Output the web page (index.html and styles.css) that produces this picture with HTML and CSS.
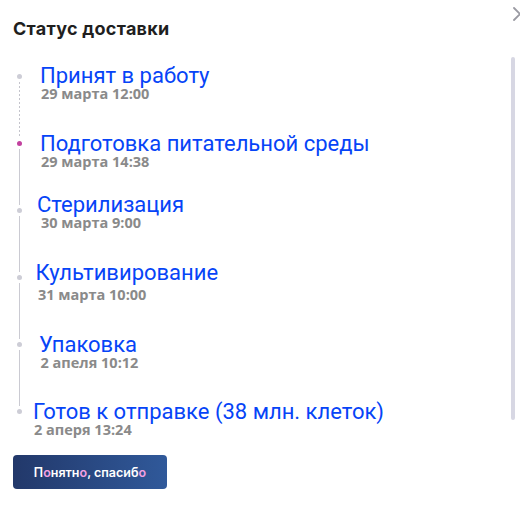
FILE: index.html
```html
<!DOCTYPE html>
<html lang="ru">
<head>
<meta charset="utf-8">
<title>Статус доставки</title>
<link rel="stylesheet" href="styles.css">
</head>
<body>
<div class="sheet">
  <header class="sheet-head">
    <h2 class="sheet-title">Статус доставки</h2>
    <button class="close" aria-label="Закрыть">
      <svg viewBox="0 0 14 14" width="14" height="14"><path d="M1 1L13 13M1 13L13 1" stroke="#9a9aa2" stroke-width="1.8" stroke-linecap="round" fill="none"/></svg>
    </button>
  </header>
  <div class="sheet-body">
    <ol class="timeline">
      <li class="step">
        <div class="step-marker"><span class="step-dot"></span><span class="step-line step-line--dashed"></span></div>
        <div class="step-info"><div class="step-name">Принят в работу</div><div class="step-date">29 марта 12:00</div></div>
      </li>
      <li class="step step--current">
        <div class="step-marker"><span class="step-dot"></span><span class="step-line"></span></div>
        <div class="step-info"><div class="step-name">Подготовка питательной среды</div><div class="step-date">29 марта 14:38</div></div>
      </li>
      <li class="step">
        <div class="step-marker"><span class="step-dot"></span><span class="step-line"></span></div>
        <div class="step-info"><div class="step-name">Стерилизация</div><div class="step-date">30 марта 9:00</div></div>
      </li>
      <li class="step">
        <div class="step-marker"><span class="step-dot"></span><span class="step-line"></span></div>
        <div class="step-info"><div class="step-name">Культивирование</div><div class="step-date">31 марта 10:00</div></div>
      </li>
      <li class="step">
        <div class="step-marker"><span class="step-dot"></span><span class="step-line"></span></div>
        <div class="step-info"><div class="step-name">Упаковка</div><div class="step-date">2 апеля 10:12</div></div>
      </li>
      <li class="step">
        <div class="step-marker"><span class="step-dot"></span></div>
        <div class="step-info"><div class="step-name">Готов к отправке (38 млн. клеток)</div><div class="step-date">2 аперя 13:24</div></div>
      </li>
    </ol>
    <div class="scrollbar"></div>
  </div>
  <button class="btn">П<span class="btn-o">о</span>нятн<span class="btn-o">о</span>, спасиб<span class="btn-o">о</span></button>
</div>
</body>
</html>
```
FILE: styles.css
```css
html, body {
  margin: 0;
  padding: 0;
  background: #fff;
  overflow: hidden;
}

.sheet {
  position: relative;
  width: 520px;
  height: 521px;
  box-sizing: border-box;
  padding: 19px 0 0 13px;
}

.sheet-title {
  margin: 0;
  font: 700 18px/20px Inter, "Liberation Sans", sans-serif;
  letter-spacing: 0.25px;
  color: #1f1f1f;
}

.close {
  position: absolute;
  left: 513px;
  top: 7px;
  width: 14px;
  height: 14px;
  padding: 0;
  border: 0;
  background: none;
}

.close svg {
  display: block;
}

.sheet-body {
  display: flex;
  margin-top: 18px;
}

.timeline {
  flex: 1;
  list-style: none;
  margin: 0;
  padding: 17px 0 0 4px;
}

.step {
  display: flex;
  height: 67px;
}

.step:last-child {
  height: auto;
}

.step-marker {
  flex: none;
  width: 5px;
  display: flex;
  flex-direction: column;
}

.step-dot {
  width: 5px;
  height: 5px;
  border-radius: 50%;
  background: #cdcdd6;
}

.step--current .step-dot {
  background: #c2419f;
}

.step-line {
  flex: 1;
  width: 1px;
  margin: 3px 0 3px 2px;
  background: #cacad2;
}

.step-line--dashed {
  background: repeating-linear-gradient(to bottom, #c4c4cc 0 2px, transparent 2px 4px);
}

.step-info {
  margin-left: 11px;
}

.step-name {
  font: 400 22px/22px Roboto, "Liberation Sans", sans-serif;
  color: #0644f7;
  white-space: nowrap;
}

.step-date {
  font: 700 14.5px/14px "Open Sans", "Liberation Sans", sans-serif;
  color: #8a8a8a;
  white-space: nowrap;
}

.step:nth-child(1) .step-info { margin-top: -9px; }
.step:nth-child(1) .step-name { padding-left: 7px; }
.step:nth-child(1) .step-date { padding-left: 8px; }

.step:nth-child(2) .step-info { margin-top: -8px; }
.step:nth-child(2) .step-name { padding-left: 7px; }
.step:nth-child(2) .step-date { padding-left: 8px; }

.step:nth-child(3) .step-info { margin-top: -14px; }
.step:nth-child(3) .step-name { padding-left: 4px; }
.step:nth-child(3) .step-date { padding-left: 8px; }

.step:nth-child(4) .step-info { margin-top: -13.5px; }
.step:nth-child(4) .step-name { padding-left: 2.5px; }
.step:nth-child(4) .step-date { padding-left: 5px; margin-top: 4px; }

.step:nth-child(5) .step-info { margin-top: -8.5px; }
.step:nth-child(5) .step-name { padding-left: 6px; }
.step:nth-child(5) .step-date { padding-left: 7.5px; }

.step:nth-child(6) .step-info { margin-top: -8px; }
.step:nth-child(6) .step-name { padding-left: 0; }
.step:nth-child(6) .step-date { padding-left: 1px; }

.scrollbar {
  flex: none;
  width: 4px;
  height: 363px;
  margin-right: 5px;
  border-radius: 2px;
  background: #d7d7e3;
}

.btn {
  display: block;
  margin-top: 18px;
  width: 154px;
  height: 34px;
  padding: 0;
  border: 0;
  border-radius: 4px;
  background: linear-gradient(90deg, #22386a, #30599a);
  color: #fff;
  font: 600 12.5px Inter, "Liberation Sans", sans-serif;
}

.btn-o {
  color: #f3a0e2;
}
```
